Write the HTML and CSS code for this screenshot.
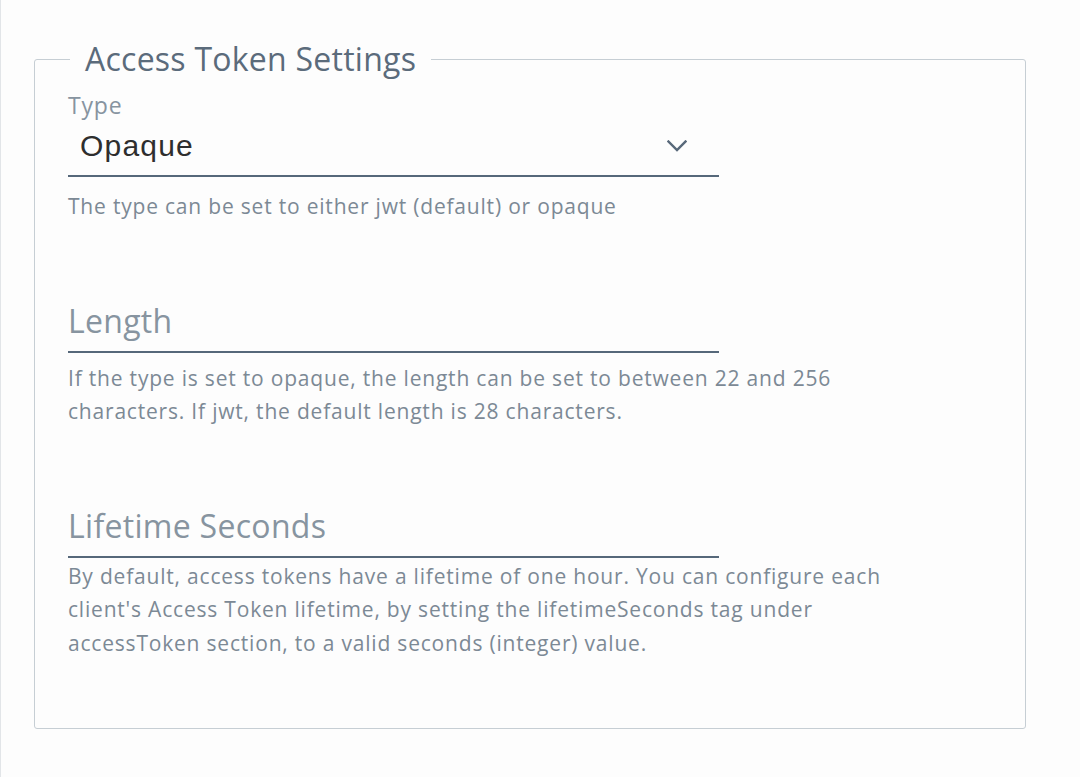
FILE: index.html
```html
<!DOCTYPE html>
<html lang="en">
<head>
<meta charset="utf-8">
<title>Access Token Settings</title>
<link rel="stylesheet" href="styles.css">
</head>
<body>
<div class="page">
  <fieldset class="panel">
    <legend class="panel-title">Access Token Settings</legend>
    <div class="field field-type">
      <div class="field-label">Type</div>
      <div class="select">
        <span class="select-value">Opaque</span>
        <svg class="chevron" width="20" height="12" viewBox="0 0 20 12" aria-hidden="true">
          <path d="M1.5 1.5 L10 10 L18.5 1.5" fill="none" stroke="#58697a" stroke-width="2.4" stroke-linecap="square"/>
        </svg>
      </div>
      <div class="help help-type">The type can be set to either jwt (default) or opaque</div>
    </div>
    <div class="field field-length">
      <div class="input"><span class="placeholder">Length</span></div>
      <div class="help help-length">If the type is set to opaque, the length can be set to between 22 and 256<br>characters. If jwt, the default length is 28 characters.</div>
    </div>
    <div class="field field-lifetime">
      <div class="input"><span class="placeholder">Lifetime Seconds</span></div>
      <div class="help help-lifetime">By default, access tokens have a lifetime of one hour. You can configure each<br>client's Access Token lifetime, by setting the lifetimeSeconds tag under<br>accessToken section, to a valid seconds (integer) value.</div>
    </div>
  </fieldset>
</div>
</body>
</html>
```

FILE: styles.css
```css
html, body {
  margin: 0;
  padding: 0;
  background: #fdfdfd;
}
body {
  font-family: "Open Sans", "Noto Sans", sans-serif;
}
.page {
  border-left: 1px solid #e2e5e8;
  min-height: 777px;
  box-sizing: border-box;
  padding-top: 41px;
  padding-left: 33px;
}
.panel {
  margin: 0;
  width: 992px;
  height: 688px;
  box-sizing: border-box;
  border: 1.5px solid #c6ced4;
  border-radius: 3px;
  padding: 13px 33px 0 33px;
}
.panel-title {
  font-size: 32px;
  line-height: 36px;
  letter-spacing: 0.25px;
  color: #5b6b7b;
  padding: 0 15px;
  margin-left: 2px;
}
.field {
  width: 651px;
}
.field-label {
  font-size: 23px;
  line-height: 30px;
  letter-spacing: 0.8px;
  color: #8794a0;
}
.select {
  height: 55px;
  border-bottom: 2px solid #56687a;
  display: flex;
  align-items: center;
  justify-content: space-between;
  padding: 0 32px 0 12px;
}
.select-value {
  font-family: "Liberation Sans", Arial, sans-serif;
  font-size: 30px;
  letter-spacing: 1.2px;
  color: #2e2e2e;
  margin-top: -3px;
}
.chevron {
  display: block;
  margin-top: -4px;
}
.help {
  font-size: 21px;
  line-height: 33.5px;
  letter-spacing: 0.8px;
  color: #7c8995;
  white-space: nowrap;
}
.help-type {
  margin-top: 13px;
}
.input {
  height: 55px;
  border-bottom: 2px solid #56687a;
  display: flex;
  align-items: center;
}
.placeholder {
  font-size: 32px;
  letter-spacing: 0.3px;
  color: #8794a0;
  margin-top: -6px;
}
.field-length {
  margin-top: 72px;
}
.help-length {
  margin-top: 9px;
}
.field-lifetime {
  margin-top: 72px;
}
.help-lifetime {
  margin-top: 2px;
}
```
